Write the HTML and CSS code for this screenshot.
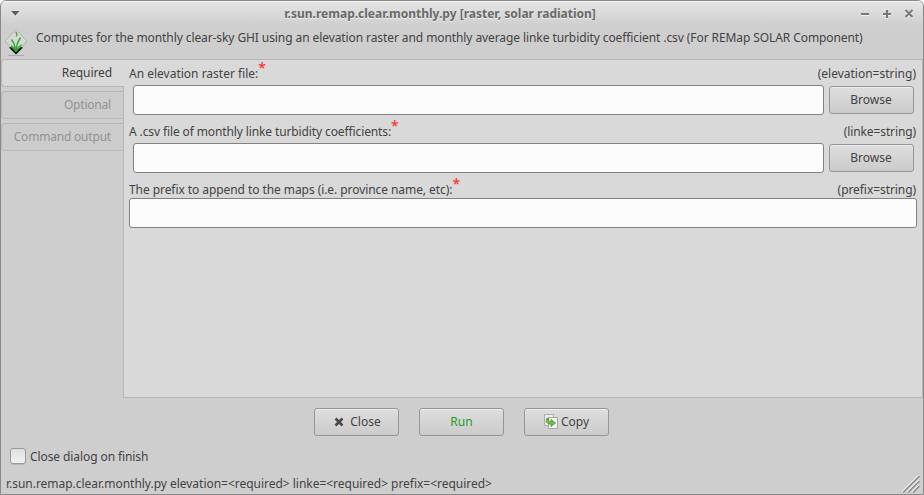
FILE: index.html
```
<!DOCTYPE html>
<html lang="en">
<head>
<meta charset="utf-8">
<title>r.sun.remap.clear.monthly.py</title>
<link rel="stylesheet" href="styles.css">
</head>
<body>
<div class="window">
  <header class="titlebar">
    <svg class="menu-arrow" width="10" height="7" viewBox="0 0 10 7"><path d="M1 2h8.500L5.300 6.800z" fill="#f4f4f4"/><path d="M1 1h8.500L5.300 5.800z" fill="#5c5c5c"/></svg>
    <h1>r.sun.remap.clear.monthly.py [raster, solar radiation]</h1>
    <svg class="controls" width="54" height="12" viewBox="0 0 54 12" fill="none" stroke-width="2">
      <g stroke="#f2f2f2" transform="translate(0 1)"><path d="M1 6h8M23 6h8M27 2v8M45.500 2l7 7M52.500 2l-7 7"/></g>
      <g stroke="#777"><path d="M1 6h8M23 6h8M27 2v8M45.500 2l7 7M52.500 2l-7 7"/></g>
    </svg>
  </header>
  <div class="description">
    <svg class="logo" width="24" height="28" viewBox="0 0 24 28">
      <path d="M12 1.500l11 11.500-11 12L1 13z" fill="#d5d8d5" stroke="#a5a9a5" stroke-width=".8"/>
      <path d="M4 27.500h16" stroke="#aaa"/>
      <path d="M5 19.500l7 7 7-7-2-.5-5 4-5-4z" fill="#151515"/>
      <path d="M11.800 24C11.500 19 10 15 7.500 11.500M12 24C12 19 13.500 14 16.500 9.500M11.500 23C10 20 8.500 18.500 7 18M12.500 23C14 19.500 15.500 18 17.500 17" fill="none" stroke="#35a830" stroke-width="1.400"/>
      <path d="M11.500 4.500c2 .5 1.500 2.500.7 4" fill="none" stroke="#42a93c" stroke-width="1.400"/>
    </svg>
    <span>Computes for the monthly clear-sky GHI using an elevation raster and monthly average linke turbidity coefficient .csv (For REMap SOLAR Component)</span>
  </div>
  <main class="notebook">
    <nav class="tabs">
      <div class="tab active">Required</div>
      <div class="tab">Optional</div>
      <div class="tab">Command output</div>
    </nav>
    <section class="panel">
      <div class="label"><span>An elevation raster file:<b>*</b></span><span>(elevation=string)</span></div>
      <div class="file-row"><div class="input"></div><div class="button browse">Browse</div></div>
      <div class="label"><span class="tight">A .csv file of monthly linke turbidity coefficients:<b>*</b></span><span class="tight">(linke=string)</span></div>
      <div class="file-row"><div class="input"></div><div class="button browse">Browse</div></div>
      <div class="label"><span class="snug">The prefix to append to the maps (i.e. province name, etc):<b>*</b></span><span class="snug">(prefix=string)</span></div>
      <div class="input"></div>
    </section>
  </main>
  <div class="actions">
    <div class="button close"><svg width="10" height="10" viewBox="0 0 10 10"><path d="M1.500 1.500l7 7M8.500 1.500l-7 7" stroke="#494949" stroke-width="2.600"/></svg><span class="close-text">Close</span></div>
    <div class="button run">Run</div>
    <div class="button"><svg class="copy-icon" width="14" height="15" viewBox="0 0 14 15"><path d="M.5.5h9v11h-9z" fill="#eee" stroke="#aaa"/><path d="M4.500 3.500h9v11h-9z" fill="#f2f2f2" stroke="#a4a4a4"/><path d="M3 4c-2 4 0 6 4 6.200V12.500l4.500-3.500L7 5.500v2.200C5 7.500 4 6.500 4.500 4.500z" fill="#74bd42" stroke="#4b9130" stroke-width=".8"/></svg><span class="copy-text">Copy</span></div>
  </div>
  <div class="check-row"><i class="checkbox"></i><span>Close dialog on finish</span></div>
  <footer class="status"><span>r.sun.remap.clear.monthly.py elevation=&lt;required&gt; linke=&lt;required&gt; prefix=&lt;required&gt;</span>
    <svg width="18" height="18" viewBox="0 0 18 18"><path d="M0 17L17 0M5 17L17 5M10 17l7-7" stroke="#f5f5f5" stroke-width="1.300"/><path d="M1 17.500L17.500 1M6 17.500L17.500 6M11 17.500l6.500-6.500" stroke="#858585" stroke-width="1.300"/></svg>
  </footer>
</div>
</body>
</html>
```

FILE: styles.css
```
* { box-sizing: border-box; }
body { margin: 0; background: #fff; font: 12px/16px "Noto Sans", sans-serif; color: #434343; white-space: nowrap; }
.window { height: 495px; border: 1px solid #898989; border-radius: 6px 6px 0 0; background: #cecece; overflow: hidden; display: flex; flex-direction: column; }
.titlebar { height: 25px; flex: none; display: flex; align-items: center; padding: 0 9px; background: linear-gradient(#e6e6e6, #cecece); box-shadow: inset 0 1px #f5f5f5; }
.menu-arrow { width: 10px; }
h1 { flex: 1; margin: 0; text-align: center; font-size: 12px; line-height: 16px; color: #696969; text-shadow: 0 1px #eee; }
.controls { width: 54px; }
.description { height: 33px; flex: none; display: flex; padding-left: 3px; letter-spacing: -.088px; }
.logo { margin: 2px 8px 0 0; }
.description span { margin-top: 4px; }
.notebook { height: 339px; flex: none; display: flex; }
.tabs { width: 122px; display: flex; flex-direction: column; gap: 4px; }
.tab { height: 28px; border: 1px solid #b8b8b8; border-right: 0; border-radius: 4px 0 0 4px; background: #ccc; color: #929292; text-align: right; padding: 5px 12px 0 0; letter-spacing: -.2px; }
.tab.active { background: #d9d9d9; color: #3f3f3f; width: 123px; letter-spacing: -.1px; position: relative; z-index: 1; }
.panel { flex: 1; border: 1px solid #b6b6b6; background: #d9d9d9; padding: 5px 5px 0; }
.label { height: 20px; display: flex; justify-content: space-between; align-items: flex-start; line-height: 18px; }
.label > :last-child { margin-right: 1px; }
.tight { letter-spacing: -.115px; }
.snug { letter-spacing: -.07px; }
.label b { color: #f22; font-weight: 400; font-size: 14px; line-height: 0; position: relative; top: -5px; left: 0; }
.file-row { display: flex; padding: 0 3px 0 4px; gap: 5px; height: 30px; align-items: center; margin-bottom: 8px; }
.input { height: 30px; background: #fcfcfc; border: 1px solid #818181; border-radius: 3px; }
.file-row .input { flex: 1; }
.label:nth-last-child(2) { height: 17px; }
.button { width: 85px; height: 28px; border: 1px solid #969696; border-radius: 3px; background: linear-gradient(#dedede, #cbcbcb); box-shadow: inset 0 1px #eee; display: flex; justify-content: center; align-items: center; }
.browse { padding-right: 1px; }
.close { padding-left: 2px; }
.actions { height: 28px; display: flex; justify-content: center; gap: 20px; margin-top: 10px; flex: none; padding-right: 1px; }
.close-text { margin-left: 6px; }
.copy-icon { margin-top: -2px; }
.copy-text { margin-left: 3px; }
.run { color: #289a24; }
.check-row { display: flex; align-items: center; gap: 4px; margin: 12px 0 0 9px; height: 16px; letter-spacing: -.09px; }
.check-row span { padding-top: 2px; }
.checkbox { width: 16px; height: 16px; border: 1px solid #999; border-radius: 3px; background: linear-gradient(#e0e0e0, #f0f0f0); box-shadow: 0 1px #b8b8b8; }
.status { display: flex; justify-content: space-between; margin-top: 11px; padding: 0 3px 0 5px; height: 18px; line-height: 17px; letter-spacing: -.024px; }
```
